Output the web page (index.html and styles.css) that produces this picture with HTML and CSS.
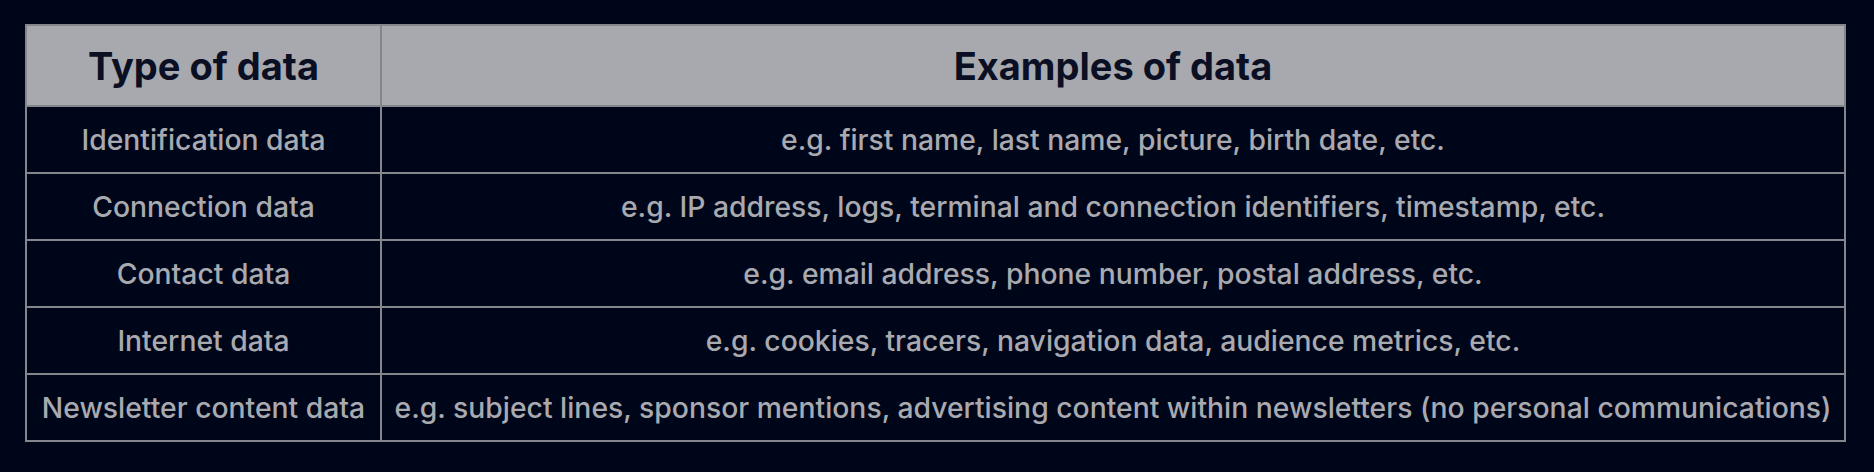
FILE: index.html
```html
<!DOCTYPE html>
<html lang="en">
<head>
<meta charset="utf-8">
<title>Types of data</title>
<link rel="stylesheet" href="styles.css">
</head>
<body>
<div class="data-table" role="table">
  <div class="cell head" role="columnheader">Type of data</div>
  <div class="cell head" role="columnheader">Examples of data</div>

  <div class="cell" role="cell">Identification data</div>
  <div class="cell" role="cell">e.g. first name, last name, picture, birth date, etc.</div>

  <div class="cell" role="cell">Connection data</div>
  <div class="cell" role="cell">e.g. IP address, logs, terminal and connection identifiers, timestamp, etc.</div>

  <div class="cell" role="cell">Contact data</div>
  <div class="cell" role="cell">e.g. email address, phone number, postal address, etc.</div>

  <div class="cell" role="cell">Internet data</div>
  <div class="cell" role="cell">e.g. cookies, tracers, navigation data, audience metrics, etc.</div>

  <div class="cell" role="cell">Newsletter content data</div>
  <div class="cell" role="cell">e.g. subject lines, sponsor mentions, advertising content within newsletters (no personal communications)</div>
</div>
</body>
</html>
```
FILE: styles.css
```css
html, body {
  margin: 0;
  background: #00061a;
}
body {
  padding: 24px 0 0 25px;
  font-family: "Inter", "Liberation Sans", sans-serif;
}
.data-table {
  display: grid;
  grid-template-columns: 355px 1464px;
  grid-auto-rows: 67px;
  grid-template-rows: 81px;
  width: max-content;
  border-top: 2px solid #85868c;
  border-left: 2px solid #85868c;
}
.cell {
  box-sizing: border-box;
  display: flex;
  align-items: center;
  justify-content: center;
  border-right: 2px solid #85868c;
  border-bottom: 2px solid #85868c;
  color: #a9aab0;
  font-size: 28.3px;
  font-weight: 500;
  white-space: nowrap;
  text-align: center;
}
.head {
  background: #a8a9ae;
  color: #0a0f24;
  font-size: 38px;
  font-weight: 700;
}
```
